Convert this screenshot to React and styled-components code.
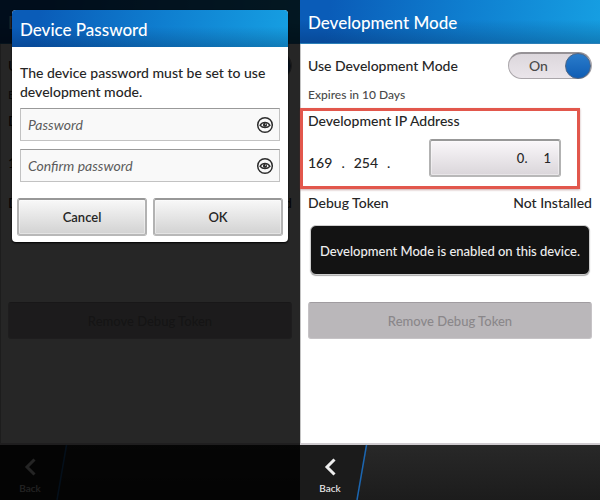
import React, { useId, useState } from 'react';
import styled, { createGlobalStyle } from 'styled-components';

const colors = {
  text: '#262626',
  muted: '#4a4a4a',
  highlight: '#e2574c'
};

const headerGradient = `
  linear-gradient(to bottom, rgba(0,20,60,0) 45%, rgba(0,20,60,0.25) 100%),
  linear-gradient(100deg, #0a5cb8 10%, #0f7fd0 55%, #169fe2 100%)
`;

const GlobalStyle = createGlobalStyle`
  * {
    box-sizing: border-box;
  }

  body {
    margin: 0;
    color: ${colors.text};
    font-family: Lato, sans-serif;
    font-size: 14px;
    font-weight: 500;
  }

  button,
  input {
    font: inherit;
    color: inherit;
  }

  h1, h2, p {
    margin: 0;
    font: inherit;
  }
`;

const Page = styled.div`
  display: grid;
  grid-template-columns: 1fr 1fr;
  min-height: 100vh;
`;

const Pane = styled.div`
  position: relative;
  display: grid;
`;

const Screen = styled.section`
  display: flex;
  flex-direction: column;
  background: #fff;
`;

const ScreenHeader = styled.header`
  height: 44px;
  padding: 0 8px;
  border-bottom: 1px solid #2b7fb8;
  background: ${headerGradient};
  color: #fff;
  font-size: 17px;
  line-height: 46px;
`;

const Content = styled.main`
  flex: 1;
  border-bottom: 2px solid #cfcbcf;
  box-shadow: inset 1px 0 0 #c4c4c4;
`;

const Row = styled.div`
  display: flex;
  align-items: center;
  justify-content: space-between;
  height: ${props => props.$height};
  padding: 0 8px;
`;

const Expires = styled.p`
  height: 22px;
  padding: 0 8px;
  color: ${colors.muted};
  font-size: 12px;
  line-height: 18px;
`;

const Toggle = styled.label`
  position: relative;
  display: flex;
  align-items: center;
  justify-content: space-between;
  width: 84px;
  height: 27px;
  padding-left: 20px;
  border: 1px solid #aaa6aa;
  border-top: 2px solid #969296;
  border-radius: 14px;
  background: linear-gradient(#dcd7dc, #eae5ea);
  color: ${colors.muted};
  line-height: 24px;

  input {
    position: absolute;
    inset: 0;
    margin: 0;
    opacity: 0;
  }

  &:after {
    content: '';
    width: 24px;
    height: 24px;
    border: 1px solid #4c6484;
    border-radius: 50%;
    background: linear-gradient(#2a7ccb, #0f5db4);
  }
`;

const AddressBox = styled.div`
  width: 280px;
  max-width: 100%;
  height: 81px;
  padding: 0 4px 0 5px;
  border: 3px solid ${props => (props.$highlighted ? colors.highlight : 'transparent')};
  box-shadow: ${props => (props.$highlighted ? '0 1px 2px rgba(120,40,40,0.4)' : 'none')};

  h2 {
    line-height: 20px;
  }
`;

const AddressRow = styled.div`
  display: flex;
  align-items: center;
  justify-content: space-between;
  padding: 8px 12px 0 0;
`;

const Prefix = styled.span`
  display: flex;
  gap: 9px;
  padding-top: 8px;
`;

const Raised = styled.button`
  flex: 1;
  height: 38px;
  padding: 0;
  border: 2px solid #a9a9a9;
  border-color: #989898 #b2b2b2 #b8b8b8;
  border-radius: 3px;
  background: linear-gradient(#f8f8f8, #d2d2d2);
  box-shadow: inset 0 0 0 1px rgba(255,255,255,0.4);
  font-size: 13px;
  font-weight: 600;
`;

const Picker = styled(Raised)`
  display: flex;
  flex: none;
  align-items: center;
  justify-content: flex-end;
  gap: 16px;
  width: 132px;
  padding-right: 8px;
  background: linear-gradient(#faf7fa, #dad6da);
  font-weight: 500;
`;

const NoticeArea = styled.div`
  display: grid;
  align-content: start;
  height: 86px;
  padding: 9px 10px 0;
`;

const Notice = styled.p`
  height: 50px;
  border: 1px solid #cfcfcf;
  border-radius: 6px;
  background: #131313;
  box-shadow: 0 1px 1px #aaa;
  color: #eee;
  font-size: 13px;
  line-height: 50px;
  text-align: center;
  white-space: nowrap;
`;

const RemoveButton = styled.button`
  display: block;
  width: calc(100% - 16px);
  height: 37px;
  margin: 0 8px;
  border: 1px solid #c6c3c6;
  border-top-color: #a09ca0;
  border-radius: 3px;
  background: #bab7ba;
  font-size: 13px;

  &:disabled {
    color: #8a878a;
  }
`;

const ActionBar = styled.footer`
  position: relative;
  display: flex;
  height: 55px;
  background: linear-gradient(#282828, #1c1c1c);
  color: #eee;
`;

const BackButton = styled.button`
  display: flex;
  flex-direction: column;
  align-items: center;
  width: 60px;
  padding: 13px 0 0;
  border: none;
  background: #1b1b1b;
  font-size: 10px;
  line-height: 14px;

  svg {
    margin-bottom: 5px;
  }
`;

const Shade = styled.div`
  position: absolute;
  inset: 0;
  padding: 10px 12px;
  background: rgba(0,0,0,0.85);
`;

const Dialog = styled.form`
  overflow: hidden;
  border-radius: 4px;
  background: #fff;
  box-shadow: 0 1px 2px #000;
`;

const DialogHeader = styled.h2`
  && {
    height: 37px;
    padding: 0 8px;
    background: ${headerGradient};
    color: #fff;
    font-size: 17px;
    line-height: 39px;
  }
`;

const Message = styled.p`
  && {
    padding: 16px 8px 7px;
    line-height: 19px;
  }
`;

const Field = styled.div`
  display: flex;
  align-items: center;
  height: 33px;
  margin: 0 8px 8px;
  border: 1px solid #c2c2c2;
  border-top-color: #999;
  background: #f9f9f9;

  input {
    flex: 1;
    min-width: 0;
    padding: 0 7px;
    border: none;
    outline: none;
    background: none;
  }

  input::placeholder {
    color: #5c5c5c;
    font-style: italic;
    font-weight: 400;
    opacity: 1;
  }

  button {
    display: flex;
    padding: 0 5px;
    border: none;
    background: none;
  }
`;

const DialogActions = styled.div`
  display: flex;
  gap: 6px;
  padding: 8px 5px 6px;
`;

const Slash = styled.svg`
  flex: none;
`;

const EyeIcon = () => (
  <svg width="18" height="18" viewBox="0 0 18 18" fill="none" stroke="#2e2e2e">
    <circle cx="9" cy="9" r="7.3" strokeWidth="1.5" />
    <path d="M4 9.300C5.200 7.400 6.900 6.300 9 6.300s3.800 1.100 5 3C12.600 10.900 11 11.600 9 11.600S5.400 10.900 4 9.300Z" strokeWidth="1.300" />
    <circle cx="9" cy="8.900" r="2.100" fill="#2e2e2e" stroke="none" />
    <circle cx="9.600" cy="8.200" r=".6" fill="#ddd" stroke="none" />
  </svg>
);

const PasswordField = ({ label }) => {
  const [visible, setVisible] = useState(false);
  return (
    <Field>
      <input type={visible ? 'text' : 'password'} aria-label={label} placeholder={label} />
      <button type="button" aria-label={`Show ${label}`} onClick={() => setVisible(!visible)}>
        <EyeIcon />
      </button>
    </Field>
  );
};

const SettingsScreen = ({ notice, highlighted, inert }) => {
  const id = useId();
  return (
    <Screen inert={inert}>
      <ScreenHeader><h1>Development Mode</h1></ScreenHeader>
      <Content as={inert ? 'div' : 'main'}>
        <Row $height="42px">
          <label htmlFor={id}>Use Development Mode</label>
          <Toggle>
            On
            <input id={id} type="checkbox" role="switch" defaultChecked />
          </Toggle>
        </Row>
        <Expires>Expires in 10 Days</Expires>
        <AddressBox $highlighted={highlighted}>
          <h2>Development IP Address</h2>
          <AddressRow>
            <Prefix>
              <span>169</span><span>.</span><span>254</span><span>.</span>
            </Prefix>
            <Picker type="button">
              <span>0.</span><span>1</span>
            </Picker>
          </AddressRow>
        </AddressBox>
        <Row $height="27px">
          <span>Debug Token</span>
          <span>Not Installed</span>
        </Row>
        <NoticeArea>
          {notice && <Notice role="status">{notice}</Notice>}
        </NoticeArea>
        <RemoveButton type="button" disabled>Remove Debug Token</RemoveButton>
      </Content>
      <ActionBar>
        <BackButton type="button">
          <svg width="12" height="18" viewBox="0 0 12 18" fill="none" stroke="#eee" strokeWidth="3">
            <path d="M10.500 1.500 3 9l7.500 7.500" />
          </svg>
          Back
        </BackButton>
        <Slash width="10" height="55" viewBox="0 0 10 55" overflow="visible">
          <path d="M-4 0H6.500L-3 55H-4Z" fill="#1b1b1b" />
          <path d="M6.500 0-3 55" stroke="#1c66b0" strokeWidth="1.500" />
        </Slash>
      </ActionBar>
    </Screen>
  );
};

const PasswordDialog = () => (
  <Shade>
    <Dialog role="dialog" aria-label="Device Password" onSubmit={e => e.preventDefault()}>
      <DialogHeader>Device Password</DialogHeader>
      <Message>The device password must be set to use development mode.</Message>
      <PasswordField label="Password" />
      <PasswordField label="Confirm password" />
      <DialogActions>
        <Raised type="button">Cancel</Raised>
        <Raised type="submit">OK</Raised>
      </DialogActions>
    </Dialog>
  </Shade>
);

const App = () => (
  <Page>
    <GlobalStyle />
    <Pane>
      <SettingsScreen inert />
      <PasswordDialog />
    </Pane>
    <Pane>
      <SettingsScreen highlighted notice="Development Mode is enabled on this device." />
    </Pane>
  </Page>
);

export default App;
